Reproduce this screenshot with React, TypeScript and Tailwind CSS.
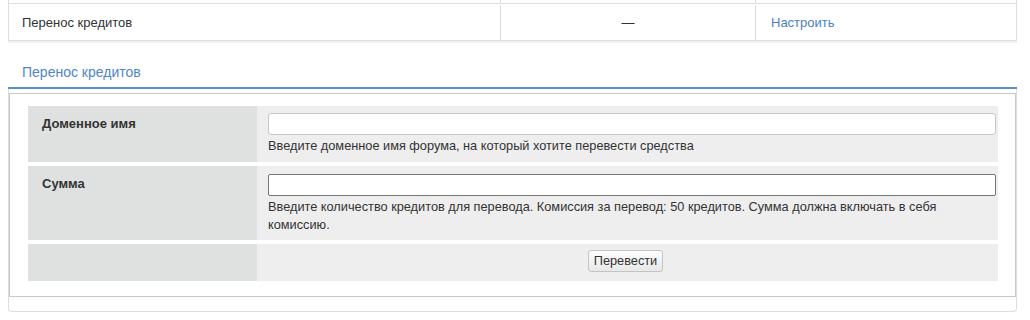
export default function App() {
  return (
    <div className="h-[320px] w-[1030px] bg-white font-['Liberation_Sans',Arial,sans-serif] text-[13px] text-[#333]">
      {/* Settings table (tail) */}
      <div className="ml-2 w-[1009px]">
        <div className="flex h-[4px] border-x border-b border-[#ddd]">
          <div className="w-[492px] border-r border-[#ddd]" />
          <div className="w-[255px] border-r border-[#ddd]" />
          <div className="flex-1" />
        </div>
        <div className="flex h-[37px] border-x border-b border-[#ddd] pt-[1px] shadow-[0_2px_0_#f1f1f1]">
          <div className="flex w-[492px] items-center border-r border-[#ddd] pl-[13px]">Перенос кредитов</div>
          <div className="flex w-[255px] items-center justify-center border-r border-[#ddd]">—</div>
          <div className="flex flex-1 items-center pl-[15px]">
            <a className="cursor-pointer text-[#4a7fc0]">Настроить</a>
          </div>
        </div>
      </div>

      {/* Transfer section */}
      <div className="ml-2 w-[1009px]">
        <div className="mt-[21px] border-b-2 border-[#5b8fcb] pb-[5px] pl-[14px] text-[14px] leading-[20px] text-[#4f86c6]">
          Перенос кредитов
        </div>
        <div className="rounded-b-[4px] border-x border-b border-[#ddd] pb-[14px] pt-[4px]">
          <div className="border border-[#c8c8c8] pb-[15px] pl-[18px] pr-[17px] pt-[12px]">
            <div className="flex flex-col gap-[4px]">
              <div className="flex h-[56px]">
                <div className="w-[229px] bg-[#dfe0e0] pl-[14px] pt-[8px] font-bold">Доменное имя</div>
                <div className="flex-1 bg-[#eeeeee] pl-[11px] pr-[2px] pt-[7px]">
                  <input className="block h-[22px] w-full rounded-[3px] border border-[#c8c8c8] bg-white px-1 outline-none" />
                  <p className="mt-[2px] text-[12.75px] leading-[18px]">
                    Введите доменное имя форума, на который хотите перевести средства
                  </p>
                </div>
              </div>
              <div className="flex h-[74px]">
                <div className="w-[229px] bg-[#dfe0e0] pl-[14px] pt-[8px] font-bold">Сумма</div>
                <div className="flex-1 bg-[#eeeeee] pl-[11px] pr-[2px] pt-[8px]">
                  <input className="block h-[22px] w-full rounded-[2px] border border-[#767676] bg-white px-1 outline-none" />
                  <p className="mt-[2px] pr-[40px] text-[12.75px] leading-[18px]">
                    Введите количество кредитов для перевода. Комиссия за перевод: 50 кредитов. Сумма должна включать в себя комиссию.
                  </p>
                </div>
              </div>
              <div className="flex h-[37px]">
                <div className="w-[229px] bg-[#dfe0e0]" />
                <div className="flex flex-1 justify-center bg-[#eeeeee] pr-[4px] pt-[6px]">
                  <button
                    type="button"
                    className="h-[22px] rounded-[3px] border border-[#c4c4c4] bg-gradient-to-b from-[#fdfdfd] to-[#e8e8e8] px-[5px] text-[12.75px] leading-[20px] text-[#333]"
                  >
                    Перевести
                  </button>
                </div>
              </div>
            </div>
          </div>
        </div>
      </div>
    </div>
  );
}
